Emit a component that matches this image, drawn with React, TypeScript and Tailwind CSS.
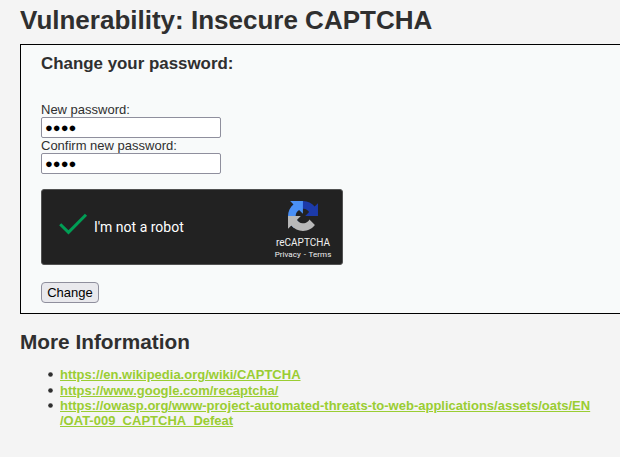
const LINKS = [
  ["https://en.wikipedia.org/wiki/CAPTCHA"],
  ["https://www.google.com/recaptcha/"],
  [
    "https://owasp.org/www-project-automated-threats-to-web-applications/assets/oats/EN",
    "/OAT-009_CAPTCHA_Defeat",
  ],
];

function PasswordField({ label }: { label: string }) {
  return (
    <label className="block h-9">
      <span className="block h-[15px] leading-[15px]">{label}</span>
      <input
        type="text"
        defaultValue="●●●●"
        className="block h-[21px] w-[180px] rounded-[2px] border border-[#8f8f9d] bg-white px-[3px] text-[13px] text-black outline-none"
      />
    </label>
  );
}

function RecaptchaLogo() {
  return (
    <svg viewBox="0 0 64 64" className="h-[30px] w-[30px]">
      <path
        fill="#1c3aa9"
        d="M64 31.955l-.033-1.37V4.687l-7.16 7.16C50.948 4.674 42.033.093 32.05.093c-10.4 0-19.622 4.96-25.458 12.64l11.736 11.86a15.55 15.55 0 0 1 4.754-5.334c2.05-1.6 4.952-2.906 8.968-2.906.485 0 .86.057 1.135.163 4.976.393 9.288 3.14 11.828 7.124l-8.307 8.307L64 31.953"
      />
      <path
        fill="#4a90f5"
        d="M31.862.094l-1.37.033H4.594l7.16 7.16C4.58 13.147 0 22.06 0 32.046c0 10.4 4.96 19.622 12.64 25.458L24.5 45.768a15.55 15.55 0 0 1-5.334-4.754c-1.6-2.05-2.906-4.952-2.906-8.968 0-.485.057-.86.163-1.135.393-4.976 3.14-9.288 7.124-11.828l8.307 8.307L31.86.095"
      />
      <path
        fill="#b9b9b9"
        d="M.001 32.045l.033 1.37v25.898l7.16-7.16c5.86 7.173 14.774 11.754 24.76 11.754 10.4 0 19.622-4.96 25.458-12.64l-11.736-11.86a15.55 15.55 0 0 1-4.754 5.334c-2.05 1.6-4.952 2.906-8.968 2.906-.485 0-.86-.057-1.135-.163-4.976-.393-9.288-3.14-11.828-7.124l8.307-8.307c-10.522.04-22.4.066-27.295-.005"
      />
    </svg>
  );
}

function Recaptcha() {
  return (
    <div className="mt-[15px] flex h-[76px] w-[302px] rounded-[3px] border border-[#525252] bg-[#222222] font-[Roboto,sans-serif] text-white">
      <div className="flex flex-1 items-center pl-[17px]">
        <svg viewBox="0 0 29 22" className="mb-[7px] h-[22px] w-[29px]" fill="none">
          <path d="M1.2 11.2L9.5 19.4L27 1.7" stroke="#009e55" strokeWidth="3" />
        </svg>
        <span className="ml-[6px] text-[14px] leading-[17px]">I'm not a robot</span>
      </div>
      <div className="mr-[9px] flex w-[60px] flex-col items-center pt-[11px]">
        <RecaptchaLogo />
        <span className="mt-[5px] text-[10px] leading-[13px] text-[#f0f0f0]">reCAPTCHA</span>
        <span className="mt-[1px] whitespace-nowrap text-[8px] leading-[10px] tracking-[0.05px] text-[#f0f0f0] [word-spacing:0.8px]">
          Privacy - Terms
        </span>
      </div>
    </div>
  );
}

export default function App() {
  return (
    <main className="h-[457px] overflow-hidden bg-[#f4f4f4] pl-5 font-['Liberation_Sans',Arial,sans-serif] text-[13px] text-[#2f2f2f]">
      <h1 className="h-11 pt-[5px] text-[26px] font-bold leading-[30px]">Vulnerability: Insecure CAPTCHA</h1>
      <section className="h-[270px] border-y border-l border-black bg-[#f8fafa] pl-5">
        <h3 className="h-[57px] pt-[9px] text-[16.9px] font-bold leading-5">Change your password:</h3>
        <PasswordField label="New password:" />
        <PasswordField label="Confirm new password:" />
        <Recaptcha />
        <button className="mt-[17px] block h-[21px] w-[58px] rounded-[4px] border border-[#8f8f9d] bg-[#e9e9ed] text-[13px] leading-[19px] text-black">
          Change
        </button>
      </section>
      <h2 className="h-[53px] pt-4 text-[20.8px] font-bold leading-6">More Information</h2>
      <ul className="pl-7 leading-[15px]">
        {LINKS.map((lines, i) => (
          <li key={lines[0]} className={i === 0 ? "mb-px flex" : "flex"}>
            <svg viewBox="0 0 5 5" className="mr-[7px] mt-[5px] h-[5px] w-[5px]" fill="#2f2f2f">
              <circle cx="2.5" cy="2.5" r="2.3" />
            </svg>
            <a href={lines.join("")} className="font-bold text-[#9acd32]">
              {lines.map((line) => (
                <span key={line} className="block underline">{line}</span>
              ))}
            </a>
          </li>
        ))}
      </ul>
    </main>
  );
}
